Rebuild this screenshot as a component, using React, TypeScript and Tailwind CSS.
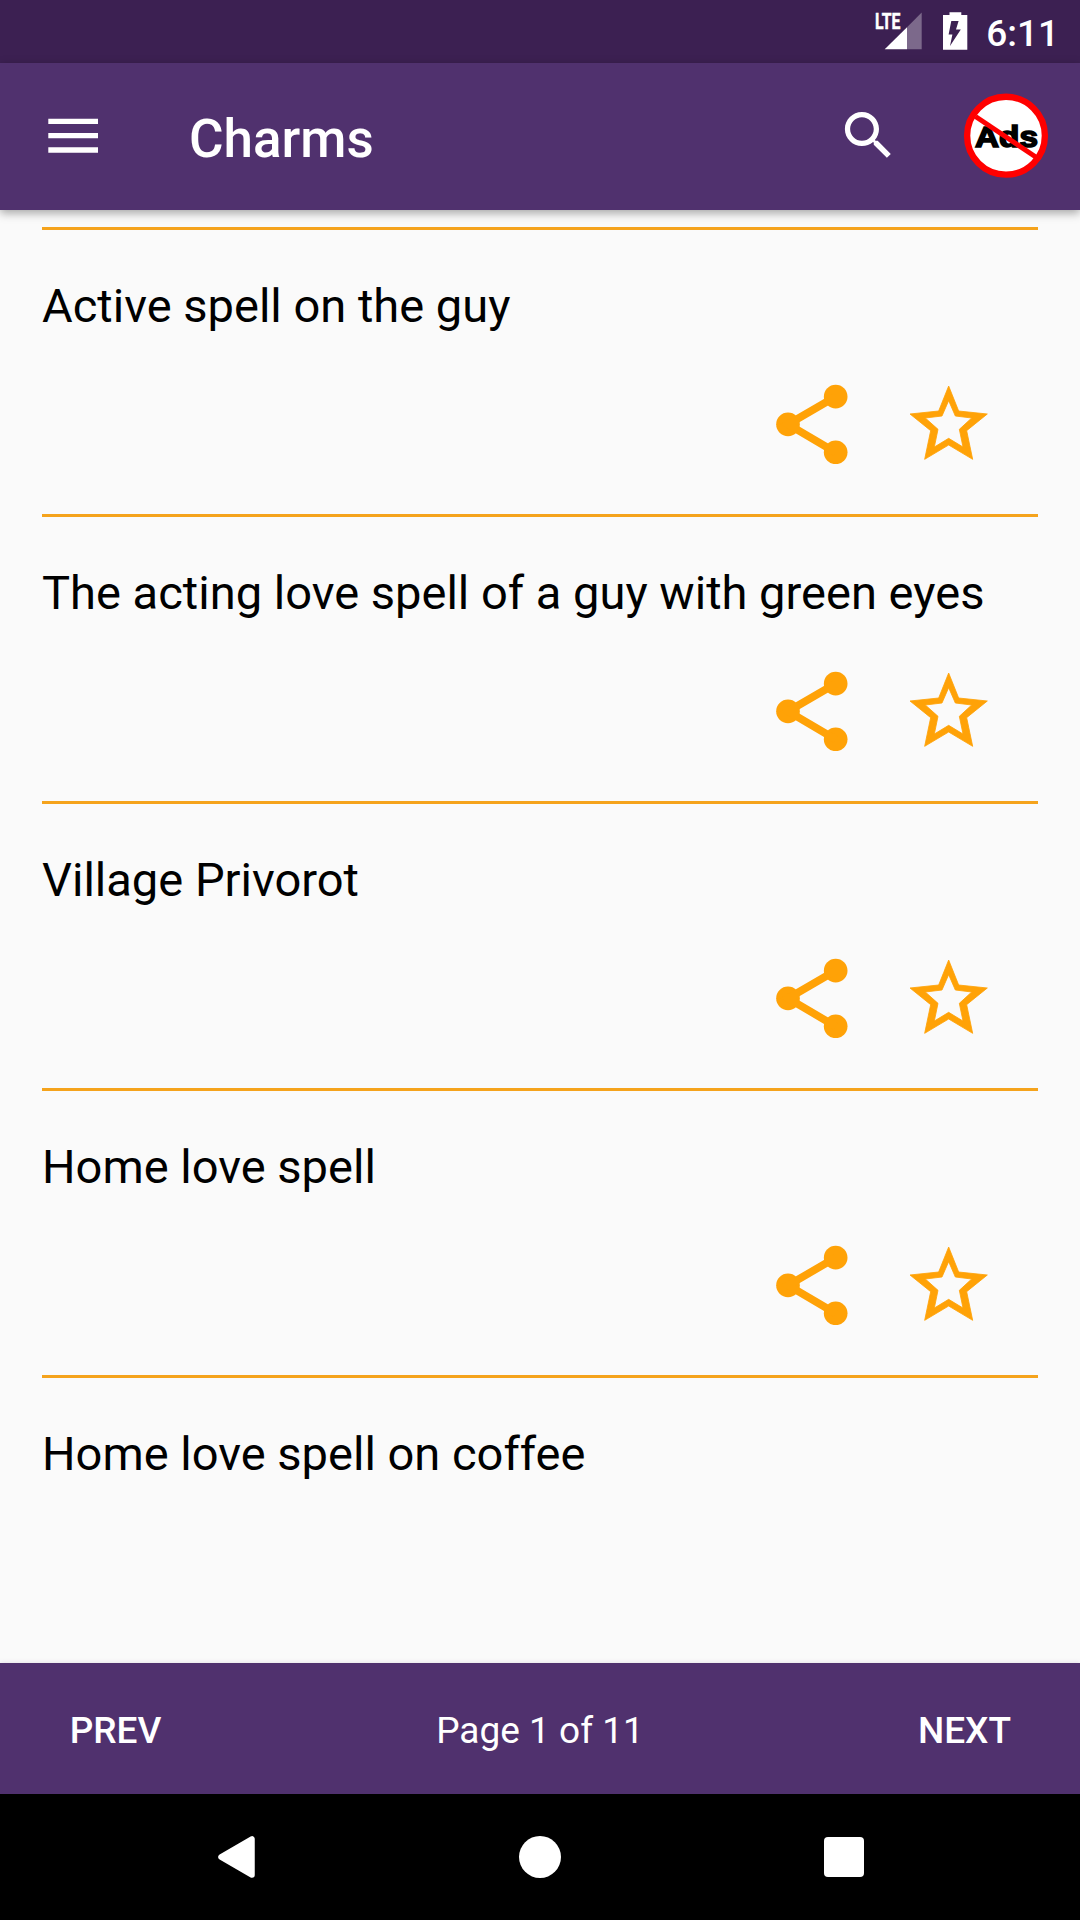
const spells = [
  'Active spell on the guy',
  'The acting love spell of a guy with green eyes',
  'Village Privorot',
  'Home love spell',
];

function StatusBar() {
  return (
    <div className="h-[63px] bg-[#3c2052] flex items-start justify-end text-white">
      <svg width="100" height="63" viewBox="870 0 100 63">
        <text x="875" y="29" fontSize="22.5" fontWeight="700" fill="#fff" stroke="#fff" strokeWidth="0.5" textLength="25.5" lengthAdjust="spacingAndGlyphs">LTE</text>
        <path d="M884.7 49.3L907 27.3V49.3Z" fill="#fff" />
        <path d="M907 27.3L921.7 12.5V49.3H907Z" fill="#fff" fillOpacity="0.33" />
        <path d="M943 15H949.5V12.3H961.3V15H967.3V49.7H943Z" fill="#fff" />
        <path d="M951.3 21H958.6L956 29.5H960.8L950 46L952.4 34.5H948.6Z" fill="#3c2052" />
      </svg>
      <span className="ml-4 mr-[21px] mt-[12px] text-[37px] leading-[43px] font-medium">6:11</span>
    </div>
  );
}

function AppBar() {
  return (
    <div className="relative z-10 h-[147px] bg-[#50316e] flex items-start text-white shadow-[0_3px_9px_rgba(0,0,0,0.35)]">
      <svg className="ml-[48px] mt-[55px]" width="50" height="36" viewBox="0 0 50 36">
        <path d="M0.3 3.4H50M0.3 17.7H50M0.3 32H50" stroke="#fff" strokeWidth="5.3" />
      </svg>
      <h1 className="ml-[91px] mt-[46px] text-[53px] leading-[60px] font-medium">Charms</h1>
      <svg className="ml-auto mt-[41px]" width="63" height="63" viewBox="0 0 24 24" fill="#fff">
        <path d="M15.5 14h-.79l-.28-.27C15.41 12.59 16 11.11 16 9.5 16 5.91 13.09 3 9.5 3S3 5.91 3 9.5 5.91 16 9.5 16c1.61 0 3.09-.59 4.23-1.57l.27.28v.79l5 4.99L20.49 19l-4.99-5zm-6 0C7.01 14 5 11.99 5 9.5S7.01 5 9.5 5 14 7.01 14 9.5 11.99 14 9.5 14z" />
      </svg>
      <svg className="ml-[63px] mr-[31px] mt-[30px]" width="86" height="86" viewBox="963 93 86 86">
        <circle cx="1006" cy="135.7" r="38.9" fill="#fff" stroke="#f00" strokeWidth="6.4" />
        <text x="975" y="146.5" fontFamily="Liberation Sans" fontSize="30" fontWeight="700" fill="#000" stroke="#000" strokeWidth="1.6" textLength="63" lengthAdjust="spacingAndGlyphs">Ads</text>
        <path d="M975.5 116.5L1036.5 157.5" stroke="#f00" strokeWidth="5" />
      </svg>
    </div>
  );
}

function ShareIcon() {
  return (
    <svg width="72" height="80" viewBox="107 72 216 240" fill="#ffa207">
      <circle cx="143" cy="193" r="35.5" />
      <circle cx="286" cy="110" r="35.5" />
      <circle cx="286" cy="277" r="35.5" />
      <path d="M286 110L143 193L286 277" fill="none" stroke="#ffa207" strokeWidth="23" />
    </svg>
  );
}

function StarIcon() {
  return (
    <svg className="mt-px" width="80" height="76" viewBox="12 15 240 228">
      <path
        fill="#ffa207"
        stroke="#ffa207"
        strokeWidth="2.5"
        fillRule="evenodd"
        d="M131 18L161 93L247 102L185 152L203 238L131 195L59 238L77 152L15 102L101 93ZM131 62L151 108L200 114L163 148L174 201L131 175L88 201L99 148L61 114L111 108Z"
      />
    </svg>
  );
}

function SpellRow({ title, actions = true }: { title: string; actions?: boolean }) {
  return (
    <div className="mx-[42px] h-[287px] shrink-0 border-t-[3px] border-[#f5a31c]">
      <p className="pt-[46px] text-[47.05px] leading-[60px] whitespace-nowrap">{title}</p>
      {actions && (
        <div className="flex justify-end gap-[61px] pr-[49px] mt-[48px]">
          <ShareIcon />
          <StarIcon />
        </div>
      )}
    </div>
  );
}

function Pager() {
  return (
    <div className="h-[131px] pt-[5px] bg-[#50316e] flex items-center justify-between text-white text-[37px] shadow-[0_0_5px_rgba(80,49,110,0.15)]">
      <button className="w-[231px] font-medium">PREV</button>
      <span>Page 1 of 11</span>
      <button className="w-[231px] font-medium">NEXT</button>
    </div>
  );
}

function NavBar() {
  return (
    <div className="h-[126px] bg-black flex items-center justify-center gap-[262px]">
      <svg width="42" height="42" viewBox="0 0 42 42">
        <path d="M6 21L37 3V39Z" fill="#fff" stroke="#fff" strokeWidth="5.5" strokeLinejoin="round" />
      </svg>
      <div className="size-[42px] rounded-full bg-white" />
      <div className="size-[42px] p-px">
        <div className="size-10 rounded-[4px] bg-white" />
      </div>
    </div>
  );
}

export default function App() {
  return (
    <div className="w-[1080px] h-[1920px] flex flex-col overflow-hidden bg-[#fafafa] text-black font-[Roboto,sans-serif]">
      <StatusBar />
      <AppBar />
      <div className="flex-1 min-h-0 overflow-hidden flex flex-col pt-[17px]">
        {spells.map((title) => (
          <SpellRow key={title} title={title} />
        ))}
        <SpellRow title="Home love spell on coffee" actions={false} />
      </div>
      <Pager />
      <NavBar />
    </div>
  );
}
